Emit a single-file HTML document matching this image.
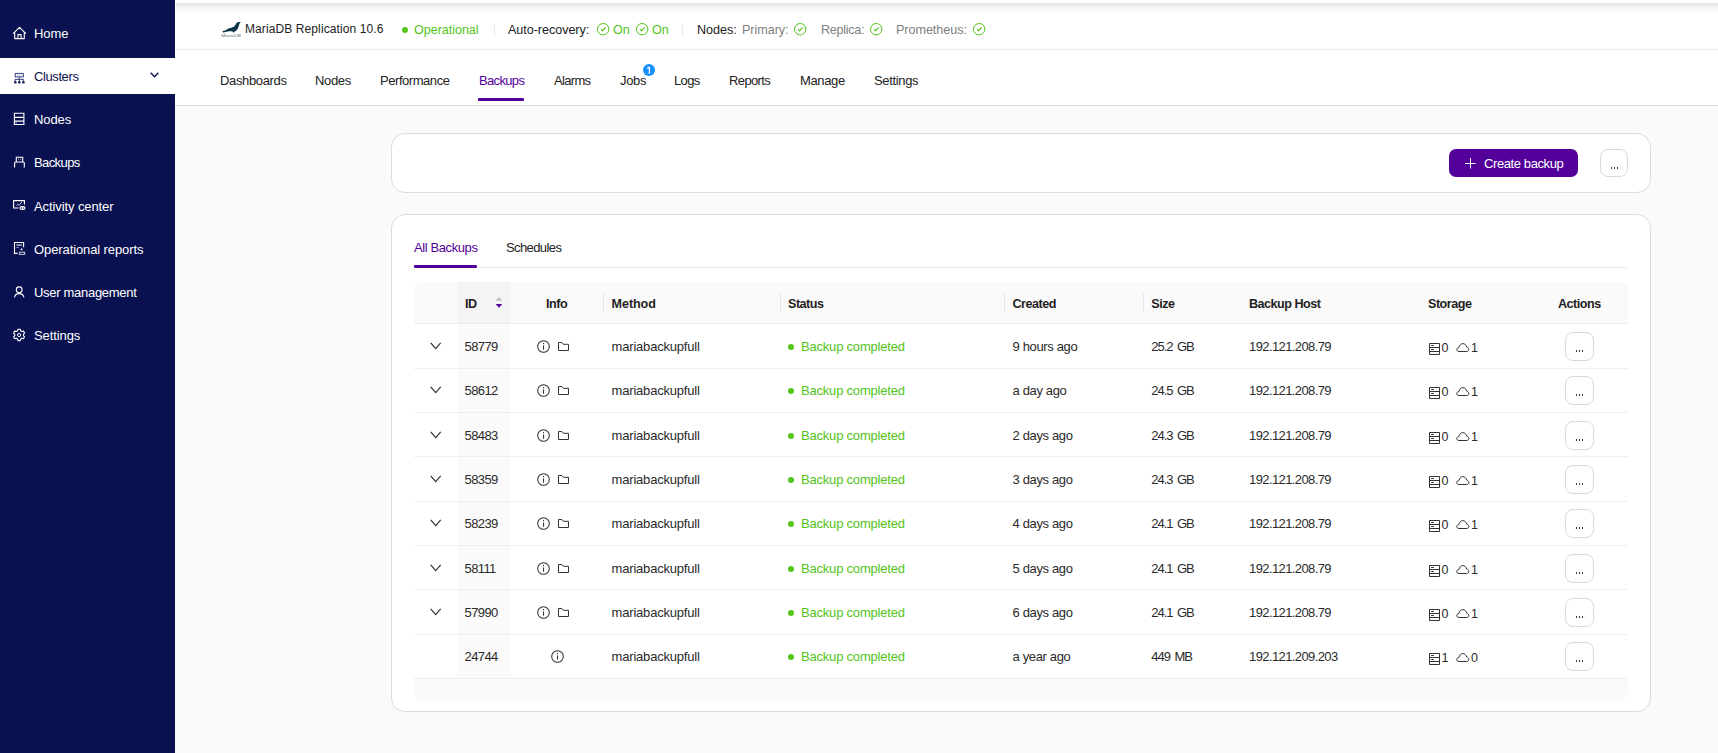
<!DOCTYPE html>
<html><head><meta charset="utf-8">
<style>
*{box-sizing:border-box;}
html,body{margin:0;padding:0;}
body{width:1718px;height:753px;overflow:hidden;position:relative;background:#fafafa;font-family:"Liberation Sans",sans-serif;color:#222;font-size:13px;}
.abs{position:absolute;white-space:nowrap;}
#sb{position:absolute;left:0;top:0;width:175px;height:753px;background:#0a1150;}
#sb .it{position:absolute;left:0;width:175px;height:36px;color:#fff;font-size:13px;line-height:36px;}
#sb .it span{position:absolute;left:34px;top:1px;letter-spacing:-0.1px;}
#sb .it svg{position:absolute;}
#sb .it.act{background:#fff;color:#0a1150;}
#hdr{position:absolute;left:175px;top:0;width:1543px;height:106px;background:#fff;border-bottom:1px solid #dedede;}
#hdr .shadow{position:absolute;left:1px;top:3px;right:0;height:11px;background:linear-gradient(#e2e2e2,#f3f3f3 35%,#fff);}
#hdr .line{position:absolute;left:1px;right:0;top:49px;height:1px;background:#ececec;}
.ht{position:absolute;top:22px;line-height:16px;font-size:12.6px;letter-spacing:-0.05px;white-space:nowrap;}
.nav{position:absolute;top:73px;line-height:16px;font-size:13px;letter-spacing:-0.35px;white-space:nowrap;color:#222;}
.card{position:absolute;background:#fff;border:1px solid #dcdcdc;border-radius:14px;}
.btnp{position:absolute;left:1449px;top:149px;width:129px;height:28px;background:#520099;border-radius:7px;color:#fff;}
.btno{position:absolute;width:28px;height:28px;border:1px solid #d9d9d9;border-radius:8px;background:#fff;}
.btno i{position:absolute;left:9.5px;top:17px;width:8px;height:2px;background:linear-gradient(90deg,#3a3a3a 1.1px,transparent 1.1px) 0 0/3px 2px repeat-x;}
.tab{position:absolute;top:240px;line-height:16px;font-size:13px;letter-spacing:-0.4px;white-space:nowrap;}
#tbl{position:absolute;left:414px;top:282px;width:1214px;height:419px;background:#fff;}
.th{position:absolute;top:0;height:42px;left:0;width:1214px;background:#fafafa;border-radius:8px 8px 0 0;border-bottom:1px solid #ececec;}
.hc{position:absolute;top:14px;line-height:16px;font-weight:bold;font-size:12.6px;letter-spacing:-0.5px;white-space:nowrap;color:#1f1f1f;}
.sep{position:absolute;top:11px;width:1px;height:20px;background:#e6e6e6;}
.row{position:absolute;left:0;width:1214px;height:44.3px;border-bottom:1px solid #ececec;}
.c{position:absolute;top:0;line-height:16px;font-size:13px;letter-spacing:-0.2px;white-space:nowrap;color:#2a2a2a;}
.g{color:#52c41a;}
.n{letter-spacing:-0.6px;}
.dot{display:inline-block;width:6px;height:6px;border-radius:50%;background:#52c41a;}
</style></head><body>
<div id="sb">
  <div class="it" style="top:15px"><svg style="left:8px;top:7px" width="24" height="24" viewBox="0 0 24 24"><path d="M5.1 11.6 L11.5 5.4 L17.9 11.6 M6.7 10.4 V16.6 H16.3 V10.4 M9.9 16.6 V12.6 H13.1 V16.6" fill="none" stroke="#fff" stroke-width="1.1" stroke-linejoin="round"/></svg><span>Home</span></div>
  <div class="it act" style="top:58px"><svg style="left:8px;top:6px" width="24" height="24" viewBox="0 0 24 24"><rect x="7.3" y="9.4" width="8" height="3.5" fill="none" stroke="#3a4080" stroke-width="1"/><rect x="8.6" y="10.6" width="5.4" height="1.1" fill="#c8cadb"/><path d="M11.3 12.9 V15.4 M6.9 15.4 H15.7 M7.2 15.4 V17 M11.3 15.4 V17 M15.3 15.4 V17" fill="none" stroke="#3a4080" stroke-width="1"/><rect x="6.1" y="17.2" width="2.4" height="2.2" fill="#0a1150"/><rect x="10.1" y="17.2" width="2.4" height="2.2" fill="#0a1150"/><rect x="14.2" y="17.2" width="2.4" height="2.2" fill="#0a1150"/></svg><span style="letter-spacing:-0.4px">Clusters</span>
    <svg style="left:150px;top:14px" width="9" height="6" viewBox="0 0 9 6"><path d="M0.7 0.7 L4.5 4.8 L8.3 0.7" fill="none" stroke="#0a1150" stroke-width="1.3"/></svg></div>
  <div class="it" style="top:101px"><svg style="left:8px;top:6px" width="24" height="24" viewBox="0 0 24 24"><path d="M6.4 6.3 H15.9 V17.5 H6.4 Z M6.4 10.4 H15.9 M6.4 14.1 H15.9" fill="none" stroke="#fff" stroke-width="1.1"/><rect x="7.2" y="15.3" width="1.8" height="1" fill="#9a9dc0"/></svg><span>Nodes</span></div>
  <div class="it" style="top:144px"><svg style="left:8px;top:6px" width="24" height="24" viewBox="0 0 24 24"><path d="M8.3 12 V7.2 H14.7 V12 M6.6 17.6 V13 Q6.6 12 7.6 12 H15.3 Q16.3 12 16.3 13 V17.6" fill="none" stroke="#fff" stroke-width="1.1"/><rect x="10" y="8.6" width="0.9" height="1.2" fill="#aab"/><rect x="12.2" y="8.6" width="0.9" height="1.2" fill="#aab"/></svg><span style="letter-spacing:-0.6px">Backups</span></div>
  <div class="it" style="top:188px"><svg style="left:8px;top:6px" width="24" height="24" viewBox="0 0 24 24"><path d="M16.4 10.6 V6.6 H5.6 V14 H10.6" fill="none" stroke="#fff" stroke-width="1.1"/><path d="M8.4 11.6 L9.6 10.4 L11.2 11.2 L13.8 8.1" fill="none" stroke="#d8d8e8" stroke-width="1"/><circle cx="13.4" cy="14" r="1.4" fill="none" stroke="#fff" stroke-width="1.1"/><circle cx="15.6" cy="14" r="1.4" fill="none" stroke="#fff" stroke-width="1.1"/></svg><span>Activity center</span></div>
  <div class="it" style="top:231px"><svg style="left:8px;top:6px" width="24" height="24" viewBox="0 0 24 24"><path d="M15.6 10.3 V5.5 H6.5 V16.4 H9.6" fill="none" stroke="#fff" stroke-width="1.1"/><rect x="8.4" y="7.3" width="5.4" height="1.5" fill="#b8bad0"/><rect x="8.4" y="9.9" width="2.4" height="0.9" fill="#9a9dc0"/><path d="M13.6 11.2 L14.8 12.3 L13.6 13.5 L12.4 12.3 Z" fill="#fff"/><rect x="11.4" y="15.2" width="5.2" height="2.2" fill="none" stroke="#c8cadb" stroke-width="1"/></svg><span>Operational reports</span></div>
  <div class="it" style="top:274px"><svg style="left:8px;top:6px" width="24" height="24" viewBox="0 0 24 24"><circle cx="11.2" cy="9.8" r="2.9" fill="none" stroke="#fff" stroke-width="1.1"/><path d="M6.5 17.4 C7 14.8 8.8 13.6 11.2 13.6 C13.6 13.6 15.4 14.8 16 17.4" fill="none" stroke="#fff" stroke-width="1.1"/></svg><span style="letter-spacing:-0.3px">User management</span></div>
  <div class="it" style="top:317px"><svg style="left:8px;top:6px" width="24" height="24" viewBox="0 0 24 24"><circle cx="11.1" cy="12" r="1.6" fill="none" stroke="#fff" stroke-width="1"/><path d="M9.49 7.96 L9.99 6.26 L12.21 6.26 L12.71 7.96 L13.75 8.56 L15.48 8.14 L16.58 10.06 L15.36 11.35 L15.36 12.55 L16.58 13.84 L15.48 15.76 L13.75 15.34 L12.71 15.94 L12.21 17.64 L9.99 17.64 L9.49 15.94 L8.45 15.34 L6.72 15.76 L5.62 13.84 L6.84 12.55 L6.84 11.35 L5.62 10.06 L6.72 8.14 L8.45 8.56 Z" fill="none" stroke="#fff" stroke-width="1.1" stroke-linejoin="round"/></svg><span>Settings</span></div>
</div>

<div id="hdr">
  <div class="shadow"></div>
  <div class="line"></div>
</div>

<!-- header row 1 -->
<svg class="abs" style="left:218px;top:18px" width="28" height="24" viewBox="0 0 28 24"><path d="M4.2 13.1 C5.5 12.9 6.6 12.8 7.7 12.2 C9 11.4 9.8 10.7 11 10.3 C13 9.6 15 9.2 16.2 8.4 C17.2 7.5 17.8 6.3 18.6 5 C19.4 4 20.6 3.9 23 4.1 C22.4 4.6 21.8 5 21.3 5.9 C20.8 7.6 20.6 9.3 19.6 11 C18.8 12.2 17.6 13.3 16.4 13.8 L15.1 14.8 L14.4 13.3 C12.6 13.3 10.9 13.3 9.4 13.5 C8 13.7 6.8 14.2 5.4 14.7 C5.3 14 4.9 13.5 4.2 13.1 Z" fill="#0c3747"/><text x="3.2" y="19.4" font-size="4.3" fill="#0c3747" fill-opacity="0.75" font-family="Liberation Sans" textLength="19.8" lengthAdjust="spacingAndGlyphs">MariaDB</text></svg>
<div class="ht" style="left:245px;top:21px;font-size:12px;letter-spacing:0.1px;">MariaDB Replication 10.6</div>
<div class="abs" style="left:401.5px;top:27px;width:6px;height:6px;border-radius:50%;background:#52c41a"></div>
<div class="ht g" style="left:414px">Operational</div>
<div class="abs" style="left:494px;top:25px;width:1px;height:11px;background:#e8e8e8"></div>
<div class="ht" style="left:508px">Auto-recovery:</div>
<svg class="abs" style="left:597px;top:23px" width="13" height="13" viewBox="0 0 13 13"><circle cx="6.2" cy="6.2" r="5.7" fill="none" stroke="#52c41a" stroke-width="1"/><path d="M4.1 6.2 L5.5 7.9 L8.7 4.3" fill="none" stroke="#52c41a" stroke-width="1.1"/></svg>
<div class="ht g" style="left:613px">On</div>
<svg class="abs" style="left:636px;top:23px" width="13" height="13" viewBox="0 0 13 13"><circle cx="6.2" cy="6.2" r="5.7" fill="none" stroke="#52c41a" stroke-width="1"/><path d="M4.1 6.2 L5.5 7.9 L8.7 4.3" fill="none" stroke="#52c41a" stroke-width="1.1"/></svg>
<div class="ht g" style="left:652px">On</div>
<div class="abs" style="left:682px;top:25px;width:1px;height:11px;background:#e8e8e8"></div>
<div class="ht" style="left:697px">Nodes:</div>
<div class="ht" style="left:742px;color:#808080">Primary:</div>
<svg class="abs" style="left:794px;top:23px" width="13" height="13" viewBox="0 0 13 13"><circle cx="6.2" cy="6.2" r="5.7" fill="none" stroke="#52c41a" stroke-width="1"/><path d="M4.1 6.2 L5.5 7.9 L8.7 4.3" fill="none" stroke="#52c41a" stroke-width="1.1"/></svg>
<div class="ht" style="left:821px;color:#808080;letter-spacing:-0.3px">Replica:</div>
<svg class="abs" style="left:870px;top:23px" width="13" height="13" viewBox="0 0 13 13"><circle cx="6.2" cy="6.2" r="5.7" fill="none" stroke="#52c41a" stroke-width="1"/><path d="M4.1 6.2 L5.5 7.9 L8.7 4.3" fill="none" stroke="#52c41a" stroke-width="1.1"/></svg>
<div class="ht" style="left:896px;color:#808080">Prometheus:</div>
<svg class="abs" style="left:973px;top:23px" width="13" height="13" viewBox="0 0 13 13"><circle cx="6.2" cy="6.2" r="5.7" fill="none" stroke="#52c41a" stroke-width="1"/><path d="M4.1 6.2 L5.5 7.9 L8.7 4.3" fill="none" stroke="#52c41a" stroke-width="1.1"/></svg>

<!-- nav -->
<div class="nav" style="left:220px">Dashboards</div>
<div class="nav" style="left:315px">Nodes</div>
<div class="nav" style="left:380px;letter-spacing:-0.45px">Performance</div>
<div class="nav" style="left:479px;color:#520099;letter-spacing:-0.66px">Backups</div>
<div class="abs" style="left:478px;top:98px;width:46px;height:3px;background:#520099;border-radius:1px"></div>
<div class="nav" style="left:554px;letter-spacing:-0.68px">Alarms</div>
<div class="nav" style="left:620px">Jobs</div>
<svg class="abs" style="left:643px;top:64px" width="12" height="12" viewBox="0 0 12 12"><circle cx="6" cy="6" r="6" fill="#1890ff"/><path d="M6.4 2.9 V9.7 M6.5 3 L4.3 4.4" fill="none" stroke="#fff" stroke-width="1.3"/></svg>
<div class="nav" style="left:674px;letter-spacing:-0.65px">Logs</div>
<div class="nav" style="left:729px;letter-spacing:-0.62px">Reports</div>
<div class="nav" style="left:800px">Manage</div>
<div class="nav" style="left:874px">Settings</div>

<!-- card 1 -->
<div class="card" style="left:391px;top:133px;width:1260px;height:60px"></div>
<div class="btnp"><svg class="abs" style="left:16px;top:9px" width="11" height="11" viewBox="0 0 11 11"><path d="M5.5 0 V10.5 M0 5.5 H10.5" stroke="#fff" stroke-width="1"/></svg><span class="abs" style="left:35px;top:7px;line-height:16px;font-size:13px;letter-spacing:-0.4px">Create backup</span></div>
<div class="btno" style="left:1600px;top:149px"><i></i></div>

<!-- card 2 -->
<div class="card" style="left:391px;top:214px;width:1260px;height:498px"></div>
<div class="tab" style="left:414px;color:#520099">All Backups</div>
<div class="tab" style="left:506px;letter-spacing:-0.6px">Schedules</div>
<div class="abs" style="left:414px;top:267px;width:1214px;height:1px;background:#ececec"></div>
<div class="abs" style="left:414px;top:265px;width:63px;height:3px;background:#520099;border-radius:1px"></div>

<div id="tbl">
<div class="th"></div>
<div class="abs" style="left:43px;top:0;width:54px;height:41px;background:#f4f4f4"></div>
<div class="abs" style="left:43px;top:42px;width:54px;height:355px;background:#fafafa"></div>
<div class="hc" style="left:50.9px">ID</div>
<div class="hc" style="left:132px">Info</div>
<div class="hc" style="left:197.6px;letter-spacing:-0.1px">Method</div>
<div class="hc" style="left:374px">Status</div>
<div class="hc" style="left:598.5px">Created</div>
<div class="hc" style="left:737.3px">Size</div>
<div class="hc" style="left:835px">Backup Host</div>
<div class="hc" style="left:1014px">Storage</div>
<div class="hc" style="left:1144px">Actions</div>
<div class="sep" style="left:189.0px"></div>
<div class="sep" style="left:365.9px"></div>
<div class="sep" style="left:590.2px"></div>
<div class="sep" style="left:729.0px"></div>
<svg class="abs" style="left:81px;top:15px" width="8" height="12" viewBox="0 0 8 12"><path d="M0.7 3.8 L4 0 L7.3 3.8 Z" fill="#bfbfbf"/><path d="M0.7 7 L4 10.8 L7.3 7 Z" fill="#520099"/></svg>
<div class="abs" style="left:0;top:86px;width:1214px;height:1px;background:#efefef"></div>
<svg class="abs" style="left:15.6px;top:60px" width="12" height="8" viewBox="0 0 12 8"><path d="M0.7 0.9 L5.7 6.6 L10.7 0.9" fill="none" stroke="#333" stroke-width="1.2"/></svg>
<div class="c n" style="left:50.5px;top:57px">58779</div>
<svg class="abs" style="left:122.5px;top:58px" width="13" height="13" viewBox="0 0 13 13"><circle cx="6.5" cy="6.5" r="5.8" fill="none" stroke="#333" stroke-width="1.05"/><rect x="6" y="5.5" width="1.05" height="4.2" fill="#333"/><rect x="6" y="3" width="1.05" height="1.2" fill="#333"/></svg>
<svg class="abs" style="left:144px;top:60px" width="12" height="10" viewBox="0 0 12 10"><path d="M0.5 8.5 V0.5 H3.9 L5.3 2.3 H10.5 V8.5 Z" fill="none" stroke="#333" stroke-width="1" stroke-linejoin="round"/></svg>
<div class="c" style="left:197.6px;top:57px">mariabackupfull</div>
<div class="abs dot" style="left:374px;top:62px"></div>
<div class="c g" style="left:387px;top:57px">Backup completed</div>
<div class="c" style="left:598.5px;top:57px;letter-spacing:-0.35px">9 hours ago</div>
<div class="c n" style="left:737.3px;top:57px;letter-spacing:-1.05px;word-spacing:2px">25.2 GB</div>
<div class="c n" style="left:835px;top:57px">192.121.208.79</div>
<svg class="abs" style="left:1015px;top:61px" width="11" height="12" viewBox="0 0 11 12"><path d="M0.5 0.5 H10.5 V11.5 H0.5 Z M0.5 4.5 H10.5 M0.5 8.5 H10.5" fill="none" stroke="#333" stroke-width="1"/><rect x="2" y="2" width="3" height="1" rx="0.5" fill="#333"/><rect x="2" y="6" width="3" height="1" rx="0.5" fill="#333"/></svg>
<div class="c" style="left:1027.5px;top:57px;font-size:12.5px;margin-top:1px">0</div>
<svg class="abs" style="left:1041.6px;top:61px" width="14" height="10" viewBox="0 0 14 10"><path d="M3 8.5 C1.6 8.5 0.8 7.6 0.8 6.5 C0.8 5.4 1.7 4.6 2.9 4.5 C3.4 2.2 4.9 0.6 6.8 0.6 C8.7 0.6 10.2 2.1 10.7 4.1 C12 4.4 12.8 5.3 12.8 6.5 C12.8 7.7 11.9 8.5 10.8 8.5 Z" fill="none" stroke="#333" stroke-width="1"/></svg>
<div class="c" style="left:1057px;top:57px;font-size:12.5px;margin-top:1px">1</div>
<div class="btno" style="left:1151px;top:50px;width:29px;height:29px"><i style="left:10px;top:17px"></i></div>
<div class="abs" style="left:0;top:130px;width:1214px;height:1px;background:#efefef"></div>
<svg class="abs" style="left:15.6px;top:104px" width="12" height="8" viewBox="0 0 12 8"><path d="M0.7 0.9 L5.7 6.6 L10.7 0.9" fill="none" stroke="#333" stroke-width="1.2"/></svg>
<div class="c n" style="left:50.5px;top:101px">58612</div>
<svg class="abs" style="left:122.5px;top:102px" width="13" height="13" viewBox="0 0 13 13"><circle cx="6.5" cy="6.5" r="5.8" fill="none" stroke="#333" stroke-width="1.05"/><rect x="6" y="5.5" width="1.05" height="4.2" fill="#333"/><rect x="6" y="3" width="1.05" height="1.2" fill="#333"/></svg>
<svg class="abs" style="left:144px;top:104px" width="12" height="10" viewBox="0 0 12 10"><path d="M0.5 8.5 V0.5 H3.9 L5.3 2.3 H10.5 V8.5 Z" fill="none" stroke="#333" stroke-width="1" stroke-linejoin="round"/></svg>
<div class="c" style="left:197.6px;top:101px">mariabackupfull</div>
<div class="abs dot" style="left:374px;top:106px"></div>
<div class="c g" style="left:387px;top:101px">Backup completed</div>
<div class="c" style="left:598.5px;top:101px;letter-spacing:-0.35px">a day ago</div>
<div class="c n" style="left:737.3px;top:101px;letter-spacing:-1.05px;word-spacing:2px">24.5 GB</div>
<div class="c n" style="left:835px;top:101px">192.121.208.79</div>
<svg class="abs" style="left:1015px;top:105px" width="11" height="12" viewBox="0 0 11 12"><path d="M0.5 0.5 H10.5 V11.5 H0.5 Z M0.5 4.5 H10.5 M0.5 8.5 H10.5" fill="none" stroke="#333" stroke-width="1"/><rect x="2" y="2" width="3" height="1" rx="0.5" fill="#333"/><rect x="2" y="6" width="3" height="1" rx="0.5" fill="#333"/></svg>
<div class="c" style="left:1027.5px;top:101px;font-size:12.5px;margin-top:1px">0</div>
<svg class="abs" style="left:1041.6px;top:105px" width="14" height="10" viewBox="0 0 14 10"><path d="M3 8.5 C1.6 8.5 0.8 7.6 0.8 6.5 C0.8 5.4 1.7 4.6 2.9 4.5 C3.4 2.2 4.9 0.6 6.8 0.6 C8.7 0.6 10.2 2.1 10.7 4.1 C12 4.4 12.8 5.3 12.8 6.5 C12.8 7.7 11.9 8.5 10.8 8.5 Z" fill="none" stroke="#333" stroke-width="1"/></svg>
<div class="c" style="left:1057px;top:101px;font-size:12.5px;margin-top:1px">1</div>
<div class="btno" style="left:1151px;top:94px;width:29px;height:29px"><i style="left:10px;top:17px"></i></div>
<div class="abs" style="left:0;top:174px;width:1214px;height:1px;background:#efefef"></div>
<svg class="abs" style="left:15.6px;top:149px" width="12" height="8" viewBox="0 0 12 8"><path d="M0.7 0.9 L5.7 6.6 L10.7 0.9" fill="none" stroke="#333" stroke-width="1.2"/></svg>
<div class="c n" style="left:50.5px;top:146px">58483</div>
<svg class="abs" style="left:122.5px;top:147px" width="13" height="13" viewBox="0 0 13 13"><circle cx="6.5" cy="6.5" r="5.8" fill="none" stroke="#333" stroke-width="1.05"/><rect x="6" y="5.5" width="1.05" height="4.2" fill="#333"/><rect x="6" y="3" width="1.05" height="1.2" fill="#333"/></svg>
<svg class="abs" style="left:144px;top:149px" width="12" height="10" viewBox="0 0 12 10"><path d="M0.5 8.5 V0.5 H3.9 L5.3 2.3 H10.5 V8.5 Z" fill="none" stroke="#333" stroke-width="1" stroke-linejoin="round"/></svg>
<div class="c" style="left:197.6px;top:146px">mariabackupfull</div>
<div class="abs dot" style="left:374px;top:151px"></div>
<div class="c g" style="left:387px;top:146px">Backup completed</div>
<div class="c" style="left:598.5px;top:146px;letter-spacing:-0.35px">2 days ago</div>
<div class="c n" style="left:737.3px;top:146px;letter-spacing:-1.05px;word-spacing:2px">24.3 GB</div>
<div class="c n" style="left:835px;top:146px">192.121.208.79</div>
<svg class="abs" style="left:1015px;top:150px" width="11" height="12" viewBox="0 0 11 12"><path d="M0.5 0.5 H10.5 V11.5 H0.5 Z M0.5 4.5 H10.5 M0.5 8.5 H10.5" fill="none" stroke="#333" stroke-width="1"/><rect x="2" y="2" width="3" height="1" rx="0.5" fill="#333"/><rect x="2" y="6" width="3" height="1" rx="0.5" fill="#333"/></svg>
<div class="c" style="left:1027.5px;top:146px;font-size:12.5px;margin-top:1px">0</div>
<svg class="abs" style="left:1041.6px;top:150px" width="14" height="10" viewBox="0 0 14 10"><path d="M3 8.5 C1.6 8.5 0.8 7.6 0.8 6.5 C0.8 5.4 1.7 4.6 2.9 4.5 C3.4 2.2 4.9 0.6 6.8 0.6 C8.7 0.6 10.2 2.1 10.7 4.1 C12 4.4 12.8 5.3 12.8 6.5 C12.8 7.7 11.9 8.5 10.8 8.5 Z" fill="none" stroke="#333" stroke-width="1"/></svg>
<div class="c" style="left:1057px;top:146px;font-size:12.5px;margin-top:1px">1</div>
<div class="btno" style="left:1151px;top:139px;width:29px;height:29px"><i style="left:10px;top:17px"></i></div>
<div class="abs" style="left:0;top:219px;width:1214px;height:1px;background:#efefef"></div>
<svg class="abs" style="left:15.6px;top:193px" width="12" height="8" viewBox="0 0 12 8"><path d="M0.7 0.9 L5.7 6.6 L10.7 0.9" fill="none" stroke="#333" stroke-width="1.2"/></svg>
<div class="c n" style="left:50.5px;top:190px">58359</div>
<svg class="abs" style="left:122.5px;top:191px" width="13" height="13" viewBox="0 0 13 13"><circle cx="6.5" cy="6.5" r="5.8" fill="none" stroke="#333" stroke-width="1.05"/><rect x="6" y="5.5" width="1.05" height="4.2" fill="#333"/><rect x="6" y="3" width="1.05" height="1.2" fill="#333"/></svg>
<svg class="abs" style="left:144px;top:193px" width="12" height="10" viewBox="0 0 12 10"><path d="M0.5 8.5 V0.5 H3.9 L5.3 2.3 H10.5 V8.5 Z" fill="none" stroke="#333" stroke-width="1" stroke-linejoin="round"/></svg>
<div class="c" style="left:197.6px;top:190px">mariabackupfull</div>
<div class="abs dot" style="left:374px;top:195px"></div>
<div class="c g" style="left:387px;top:190px">Backup completed</div>
<div class="c" style="left:598.5px;top:190px;letter-spacing:-0.35px">3 days ago</div>
<div class="c n" style="left:737.3px;top:190px;letter-spacing:-1.05px;word-spacing:2px">24.3 GB</div>
<div class="c n" style="left:835px;top:190px">192.121.208.79</div>
<svg class="abs" style="left:1015px;top:194px" width="11" height="12" viewBox="0 0 11 12"><path d="M0.5 0.5 H10.5 V11.5 H0.5 Z M0.5 4.5 H10.5 M0.5 8.5 H10.5" fill="none" stroke="#333" stroke-width="1"/><rect x="2" y="2" width="3" height="1" rx="0.5" fill="#333"/><rect x="2" y="6" width="3" height="1" rx="0.5" fill="#333"/></svg>
<div class="c" style="left:1027.5px;top:190px;font-size:12.5px;margin-top:1px">0</div>
<svg class="abs" style="left:1041.6px;top:194px" width="14" height="10" viewBox="0 0 14 10"><path d="M3 8.5 C1.6 8.5 0.8 7.6 0.8 6.5 C0.8 5.4 1.7 4.6 2.9 4.5 C3.4 2.2 4.9 0.6 6.8 0.6 C8.7 0.6 10.2 2.1 10.7 4.1 C12 4.4 12.8 5.3 12.8 6.5 C12.8 7.7 11.9 8.5 10.8 8.5 Z" fill="none" stroke="#333" stroke-width="1"/></svg>
<div class="c" style="left:1057px;top:190px;font-size:12.5px;margin-top:1px">1</div>
<div class="btno" style="left:1151px;top:183px;width:29px;height:29px"><i style="left:10px;top:17px"></i></div>
<div class="abs" style="left:0;top:263px;width:1214px;height:1px;background:#efefef"></div>
<svg class="abs" style="left:15.6px;top:237px" width="12" height="8" viewBox="0 0 12 8"><path d="M0.7 0.9 L5.7 6.6 L10.7 0.9" fill="none" stroke="#333" stroke-width="1.2"/></svg>
<div class="c n" style="left:50.5px;top:234px">58239</div>
<svg class="abs" style="left:122.5px;top:235px" width="13" height="13" viewBox="0 0 13 13"><circle cx="6.5" cy="6.5" r="5.8" fill="none" stroke="#333" stroke-width="1.05"/><rect x="6" y="5.5" width="1.05" height="4.2" fill="#333"/><rect x="6" y="3" width="1.05" height="1.2" fill="#333"/></svg>
<svg class="abs" style="left:144px;top:237px" width="12" height="10" viewBox="0 0 12 10"><path d="M0.5 8.5 V0.5 H3.9 L5.3 2.3 H10.5 V8.5 Z" fill="none" stroke="#333" stroke-width="1" stroke-linejoin="round"/></svg>
<div class="c" style="left:197.6px;top:234px">mariabackupfull</div>
<div class="abs dot" style="left:374px;top:239px"></div>
<div class="c g" style="left:387px;top:234px">Backup completed</div>
<div class="c" style="left:598.5px;top:234px;letter-spacing:-0.35px">4 days ago</div>
<div class="c n" style="left:737.3px;top:234px;letter-spacing:-1.05px;word-spacing:2px">24.1 GB</div>
<div class="c n" style="left:835px;top:234px">192.121.208.79</div>
<svg class="abs" style="left:1015px;top:238px" width="11" height="12" viewBox="0 0 11 12"><path d="M0.5 0.5 H10.5 V11.5 H0.5 Z M0.5 4.5 H10.5 M0.5 8.5 H10.5" fill="none" stroke="#333" stroke-width="1"/><rect x="2" y="2" width="3" height="1" rx="0.5" fill="#333"/><rect x="2" y="6" width="3" height="1" rx="0.5" fill="#333"/></svg>
<div class="c" style="left:1027.5px;top:234px;font-size:12.5px;margin-top:1px">0</div>
<svg class="abs" style="left:1041.6px;top:238px" width="14" height="10" viewBox="0 0 14 10"><path d="M3 8.5 C1.6 8.5 0.8 7.6 0.8 6.5 C0.8 5.4 1.7 4.6 2.9 4.5 C3.4 2.2 4.9 0.6 6.8 0.6 C8.7 0.6 10.2 2.1 10.7 4.1 C12 4.4 12.8 5.3 12.8 6.5 C12.8 7.7 11.9 8.5 10.8 8.5 Z" fill="none" stroke="#333" stroke-width="1"/></svg>
<div class="c" style="left:1057px;top:234px;font-size:12.5px;margin-top:1px">1</div>
<div class="btno" style="left:1151px;top:227px;width:29px;height:29px"><i style="left:10px;top:17px"></i></div>
<div class="abs" style="left:0;top:307px;width:1214px;height:1px;background:#efefef"></div>
<svg class="abs" style="left:15.6px;top:282px" width="12" height="8" viewBox="0 0 12 8"><path d="M0.7 0.9 L5.7 6.6 L10.7 0.9" fill="none" stroke="#333" stroke-width="1.2"/></svg>
<div class="c n" style="left:50.5px;top:279px">58111</div>
<svg class="abs" style="left:122.5px;top:280px" width="13" height="13" viewBox="0 0 13 13"><circle cx="6.5" cy="6.5" r="5.8" fill="none" stroke="#333" stroke-width="1.05"/><rect x="6" y="5.5" width="1.05" height="4.2" fill="#333"/><rect x="6" y="3" width="1.05" height="1.2" fill="#333"/></svg>
<svg class="abs" style="left:144px;top:282px" width="12" height="10" viewBox="0 0 12 10"><path d="M0.5 8.5 V0.5 H3.9 L5.3 2.3 H10.5 V8.5 Z" fill="none" stroke="#333" stroke-width="1" stroke-linejoin="round"/></svg>
<div class="c" style="left:197.6px;top:279px">mariabackupfull</div>
<div class="abs dot" style="left:374px;top:284px"></div>
<div class="c g" style="left:387px;top:279px">Backup completed</div>
<div class="c" style="left:598.5px;top:279px;letter-spacing:-0.35px">5 days ago</div>
<div class="c n" style="left:737.3px;top:279px;letter-spacing:-1.05px;word-spacing:2px">24.1 GB</div>
<div class="c n" style="left:835px;top:279px">192.121.208.79</div>
<svg class="abs" style="left:1015px;top:283px" width="11" height="12" viewBox="0 0 11 12"><path d="M0.5 0.5 H10.5 V11.5 H0.5 Z M0.5 4.5 H10.5 M0.5 8.5 H10.5" fill="none" stroke="#333" stroke-width="1"/><rect x="2" y="2" width="3" height="1" rx="0.5" fill="#333"/><rect x="2" y="6" width="3" height="1" rx="0.5" fill="#333"/></svg>
<div class="c" style="left:1027.5px;top:279px;font-size:12.5px;margin-top:1px">0</div>
<svg class="abs" style="left:1041.6px;top:283px" width="14" height="10" viewBox="0 0 14 10"><path d="M3 8.5 C1.6 8.5 0.8 7.6 0.8 6.5 C0.8 5.4 1.7 4.6 2.9 4.5 C3.4 2.2 4.9 0.6 6.8 0.6 C8.7 0.6 10.2 2.1 10.7 4.1 C12 4.4 12.8 5.3 12.8 6.5 C12.8 7.7 11.9 8.5 10.8 8.5 Z" fill="none" stroke="#333" stroke-width="1"/></svg>
<div class="c" style="left:1057px;top:279px;font-size:12.5px;margin-top:1px">1</div>
<div class="btno" style="left:1151px;top:272px;width:29px;height:29px"><i style="left:10px;top:17px"></i></div>
<div class="abs" style="left:0;top:352px;width:1214px;height:1px;background:#efefef"></div>
<svg class="abs" style="left:15.6px;top:326px" width="12" height="8" viewBox="0 0 12 8"><path d="M0.7 0.9 L5.7 6.6 L10.7 0.9" fill="none" stroke="#333" stroke-width="1.2"/></svg>
<div class="c n" style="left:50.5px;top:323px">57990</div>
<svg class="abs" style="left:122.5px;top:324px" width="13" height="13" viewBox="0 0 13 13"><circle cx="6.5" cy="6.5" r="5.8" fill="none" stroke="#333" stroke-width="1.05"/><rect x="6" y="5.5" width="1.05" height="4.2" fill="#333"/><rect x="6" y="3" width="1.05" height="1.2" fill="#333"/></svg>
<svg class="abs" style="left:144px;top:326px" width="12" height="10" viewBox="0 0 12 10"><path d="M0.5 8.5 V0.5 H3.9 L5.3 2.3 H10.5 V8.5 Z" fill="none" stroke="#333" stroke-width="1" stroke-linejoin="round"/></svg>
<div class="c" style="left:197.6px;top:323px">mariabackupfull</div>
<div class="abs dot" style="left:374px;top:328px"></div>
<div class="c g" style="left:387px;top:323px">Backup completed</div>
<div class="c" style="left:598.5px;top:323px;letter-spacing:-0.35px">6 days ago</div>
<div class="c n" style="left:737.3px;top:323px;letter-spacing:-1.05px;word-spacing:2px">24.1 GB</div>
<div class="c n" style="left:835px;top:323px">192.121.208.79</div>
<svg class="abs" style="left:1015px;top:327px" width="11" height="12" viewBox="0 0 11 12"><path d="M0.5 0.5 H10.5 V11.5 H0.5 Z M0.5 4.5 H10.5 M0.5 8.5 H10.5" fill="none" stroke="#333" stroke-width="1"/><rect x="2" y="2" width="3" height="1" rx="0.5" fill="#333"/><rect x="2" y="6" width="3" height="1" rx="0.5" fill="#333"/></svg>
<div class="c" style="left:1027.5px;top:323px;font-size:12.5px;margin-top:1px">0</div>
<svg class="abs" style="left:1041.6px;top:327px" width="14" height="10" viewBox="0 0 14 10"><path d="M3 8.5 C1.6 8.5 0.8 7.6 0.8 6.5 C0.8 5.4 1.7 4.6 2.9 4.5 C3.4 2.2 4.9 0.6 6.8 0.6 C8.7 0.6 10.2 2.1 10.7 4.1 C12 4.4 12.8 5.3 12.8 6.5 C12.8 7.7 11.9 8.5 10.8 8.5 Z" fill="none" stroke="#333" stroke-width="1"/></svg>
<div class="c" style="left:1057px;top:323px;font-size:12.5px;margin-top:1px">1</div>
<div class="btno" style="left:1151px;top:316px;width:29px;height:29px"><i style="left:10px;top:17px"></i></div>
<div class="abs" style="left:0;top:396px;width:1214px;height:1px;background:#efefef"></div>
<div class="c n" style="left:50.5px;top:367px">24744</div>
<svg class="abs" style="left:136.5px;top:368px" width="13" height="13" viewBox="0 0 13 13"><circle cx="6.5" cy="6.5" r="5.8" fill="none" stroke="#333" stroke-width="1.05"/><rect x="6" y="5.5" width="1.05" height="4.2" fill="#333"/><rect x="6" y="3" width="1.05" height="1.2" fill="#333"/></svg>
<div class="c" style="left:197.6px;top:367px">mariabackupfull</div>
<div class="abs dot" style="left:374px;top:372px"></div>
<div class="c g" style="left:387px;top:367px">Backup completed</div>
<div class="c" style="left:598.5px;top:367px;letter-spacing:-0.35px">a year ago</div>
<div class="c n" style="left:737.3px;top:367px;letter-spacing:-1.05px;word-spacing:2px">449 MB</div>
<div class="c n" style="left:835px;top:367px">192.121.209.203</div>
<svg class="abs" style="left:1015px;top:371px" width="11" height="12" viewBox="0 0 11 12"><path d="M0.5 0.5 H10.5 V11.5 H0.5 Z M0.5 4.5 H10.5 M0.5 8.5 H10.5" fill="none" stroke="#333" stroke-width="1"/><rect x="2" y="2" width="3" height="1" rx="0.5" fill="#333"/><rect x="2" y="6" width="3" height="1" rx="0.5" fill="#333"/></svg>
<div class="c" style="left:1027.5px;top:367px;font-size:12.5px;margin-top:1px">1</div>
<svg class="abs" style="left:1041.6px;top:371px" width="14" height="10" viewBox="0 0 14 10"><path d="M3 8.5 C1.6 8.5 0.8 7.6 0.8 6.5 C0.8 5.4 1.7 4.6 2.9 4.5 C3.4 2.2 4.9 0.6 6.8 0.6 C8.7 0.6 10.2 2.1 10.7 4.1 C12 4.4 12.8 5.3 12.8 6.5 C12.8 7.7 11.9 8.5 10.8 8.5 Z" fill="none" stroke="#333" stroke-width="1"/></svg>
<div class="c" style="left:1057px;top:367px;font-size:12.5px;margin-top:1px">0</div>
<div class="btno" style="left:1151px;top:360px;width:29px;height:29px"><i style="left:10px;top:17px"></i></div>
<div class="abs" style="left:0;top:397px;width:1214px;height:22px;background:#fafafa;border-radius:0 0 8px 8px"></div>
</div>
</body></html>
